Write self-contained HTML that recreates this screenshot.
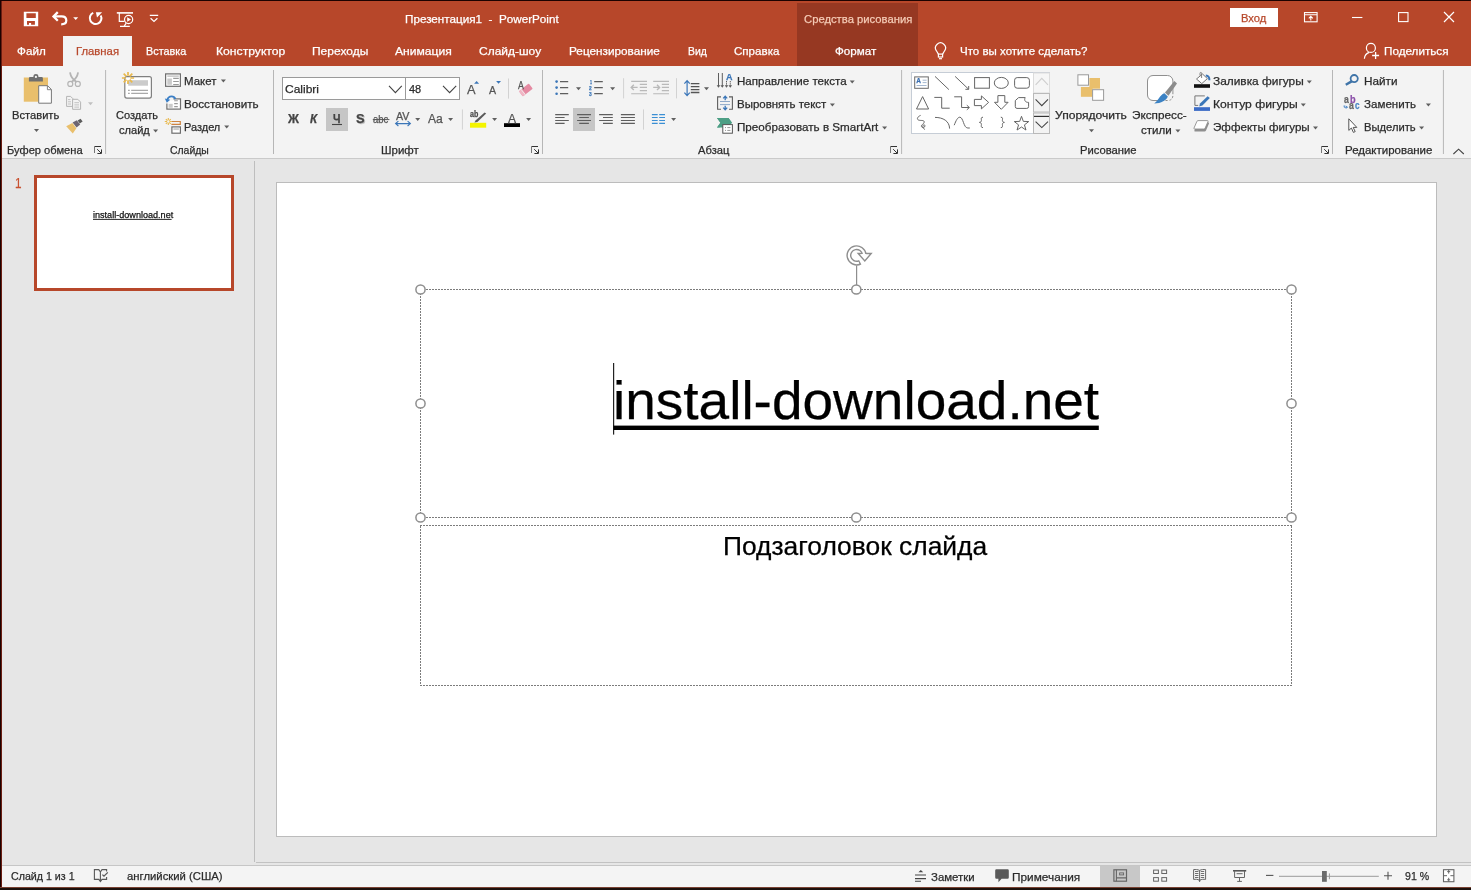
<!DOCTYPE html>
<html><head><meta charset="utf-8"><title>PowerPoint</title>
<style>
html,body{margin:0;padding:0;}
body{width:1471px;height:890px;overflow:hidden;position:relative;background:#e6e6e6;font-family:"Liberation Sans",sans-serif;}
.a{position:absolute;}
.t{position:absolute;white-space:pre;line-height:normal;transform-origin:0 0;-webkit-text-stroke:0.25px;}
svg{position:absolute;overflow:visible;}
</style></head>
<body>

<!-- window frame / title + tabs -->
<div class="a" style="left:0;top:0;width:1471px;height:66px;background:#b7472a"></div>
<div class="a" style="left:797px;top:3px;width:121px;height:63px;background:#963822"></div>
<div class="a" style="left:63px;top:36px;width:69px;height:30px;background:#f3f3f3"></div>
<div class="a" style="left:1230px;top:8px;width:48px;height:19px;background:#fff"></div>
<!-- ribbon body -->
<div class="a" style="left:0;top:66px;width:1471px;height:92px;background:#f3f3f3"></div>
<div class="a" style="left:0;top:158px;width:1471px;height:1px;background:#cacaca"></div>
<!-- workspace -->
<div class="a" style="left:254px;top:161px;width:1px;height:701px;background:#bebebe"></div>
<div class="a" style="left:256px;top:862px;width:1215px;height:1px;background:#c2c2c2"></div>
<!-- thumbnail -->
<div class="a" style="left:34px;top:175px;width:194px;height:110px;background:#fff;border:3px solid #b7472a"></div>
<!-- slide -->
<div class="a" style="left:276px;top:182px;width:1159px;height:653px;background:#fff;border:1px solid #bcbcbc"></div>
<!-- status bar -->
<div class="a" style="left:0;top:865px;width:1471px;height:1px;background:#c6c6c6"></div>
<div class="a" style="left:0;top:866px;width:1471px;height:21px;background:#f4f4f4"></div>
<div class="a" style="left:1100px;top:866px;width:40px;height:21px;background:#c8c8c8"></div>
<!-- dark frame edges -->
<div class="a" style="left:0;top:0;width:1471px;height:1px;background:#1c0200"></div>
<div class="a" style="left:0;top:0;width:1px;height:890px;background:#1c0200"></div>
<div class="a" style="left:1px;top:1px;width:1px;height:887px;background:#6a1d12"></div>
<div class="a" style="left:0;top:887px;width:1471px;height:1px;background:#7a4232"></div>
<div class="a" style="left:0;top:888px;width:1471px;height:2px;background:#1c110c"></div>
<svg width="1471" height="890" viewBox="0 0 1471 890" style="left:0;top:0">
<!-- save -->
<path d="M23.8,11.8h14.4v14.4h-14.4z M26.4,13.3v4.8h9.4v-4.8z M27,21.1v3.7h2v-1.9h2.1v1.9h3.8v-3.7z" fill="#fff" fill-rule="evenodd"/>
<!-- undo -->
<path d="M57.8,12.1L53.5,16.4L57.8,20.7" fill="none" stroke="#fff" stroke-width="2.3" stroke-linejoin="miter"/>
<path d="M54,16.4H61.6C65,16.4 66.3,18.6 66.3,20.5C66.3,23 64.2,24.3 61.2,24.3" fill="none" stroke="#fff" stroke-width="2.2"/>
<path d="M73.2,17.2h5l-2.5,2.9z" fill="#fff"/>
<!-- repeat -->
<path d="M93.2,12.9A5.8,5.8 0 1 0 100.7,15.4" fill="none" stroke="#fff" stroke-width="2"/>
<path d="M95.9,12.2H102.1L97,17.6z" fill="#fff"/>
<!-- present from start -->
<path d="M116.8,12.9H133" stroke="#fff" stroke-width="1.6" fill="none"/>
<path d="M119.3,13V21.4H124.4M126.2,23.2L124.2,26.2M120,26.3H129.8" stroke="#fff" stroke-width="1.2" fill="none"/>
<circle cx="128.6" cy="19.5" r="4.1" fill="none" stroke="#fff" stroke-width="1.2"/>
<path d="M127.2,17.2L131,19.5L127.2,21.8z" fill="#fff"/>
<!-- customize QAT -->
<path d="M149.8,15.4H158.2M150.6,18.2L154,21.4L157.4,18.2" stroke="#fff" stroke-width="1.2" fill="none"/>
<!-- ribbon display options -->
<rect x="1304.5" y="12.6" width="12.6" height="9.2" fill="none" stroke="#fff" stroke-width="1.1"/>
<path d="M1304.5,14.8H1317M1310.8,20.4V16.6M1308.8,18.4L1310.8,16.4L1312.8,18.4" fill="none" stroke="#fff" stroke-width="1.1"/>
<!-- min / max / close -->
<path d="M1352,17.5H1362.4" stroke="#fff" stroke-width="1.1"/>
<rect x="1398.6" y="12.6" width="9.4" height="9" fill="none" stroke="#fff" stroke-width="1.1"/>
<path d="M1444,12L1454,22M1454,12L1444,22" stroke="#fff" stroke-width="1.2"/>
<!-- lightbulb -->
<path d="M938.4,54.1L936.4,50.8A5,5 0 1 1 944.6,50.8L942.6,54.1" fill="none" stroke="#fff" stroke-width="1.2"/>
<rect x="938.4" y="54.1" width="4.2" height="2.9" fill="none" stroke="#fff" stroke-width="1.2"/>
<path d="M939,58.7H942" stroke="#fff" stroke-width="1.2"/>
<!-- share -->
<circle cx="1370.9" cy="47.9" r="4.5" fill="none" stroke="#fff" stroke-width="1.2"/>
<path d="M1364.4,58.8C1364.6,55.6 1366.4,53.4 1369.2,52.4" fill="none" stroke="#fff" stroke-width="1.2"/>
<path d="M1375.6,52V59M1372.1,55.5H1379.1" stroke="#fff" stroke-width="1.3"/>

<!-- paste -->
<rect x="23.8" y="77.5" width="24.2" height="24.2" fill="#e9bf6c"/>
<path d="M28.9,81.4V78.2Q28.9,77 30.2,77H33.4V76Q33.4,74.1 35.9,74.1Q38.4,74.1 38.4,76V77H41.6Q42.9,77 42.9,78.2V81.4z" fill="#6e6e6e"/>
<circle cx="35.9" cy="76.9" r="1.1" fill="#f3f3f3"/>
<path d="M38.7,85.7H47.6L51.4,89.5V103.2H38.7z" fill="#fff" stroke="#777" stroke-width="1"/>
<path d="M47.4,85.9V89.7H51.2" fill="none" stroke="#777" stroke-width="0.9"/>
<path d="M34.0,129.1h5l-2.5,3z" fill="#5f5f5f"/>
<!-- cut (disabled) -->
<circle cx="70.3" cy="83.9" r="2.5" fill="none" stroke="#b4b4b4" stroke-width="1.2"/>
<circle cx="77.8" cy="83.9" r="2.5" fill="none" stroke="#b4b4b4" stroke-width="1.2"/>
<path d="M70,72.3C70.6,76 73,79.6 76.4,81.8M78.1,72.3C77.5,76 75.1,79.6 71.7,81.8" fill="none" stroke="#b4b4b4" stroke-width="1.8"/>
<!-- copy (disabled) -->
<path d="M66.6,96.4H70.6L72.8,98.6V106.4H66.6z" fill="#f3f3f3" stroke="#b4b4b4" stroke-width="1"/>
<path d="M68,99.6H70.4M68,101.8H71M68,104H71" stroke="#b4b4b4" stroke-width="0.8"/>
<path d="M72.6,99.3H77.8L80.6,102.1V109.3H72.6z" fill="#f3f3f3" stroke="#b4b4b4" stroke-width="1"/>
<path d="M74.4,102.7H79M74.4,104.9H79M74.4,107.1H79" stroke="#b4b4b4" stroke-width="0.8"/>
<path d="M88.0,102.2h5l-2.5,3z" fill="#c0c0c0"/>
<!-- format painter -->
<path d="M66.2,126.2L72.4,123L76.4,128.2L72.8,133.4z" fill="#e9bf6c"/>
<path d="M72.6,122.4L76.8,120.2L80.2,124.6L76.6,127.6z" fill="#6d6470"/>
<path d="M77.6,120.6L80.6,118.8L82.6,121.4L79.8,123.4z" fill="#5d5d5d"/>
<path d="M101,146.5H94.5" fill="none" stroke="#333" stroke-width="1"/><path d="M94.5,146.5V153" fill="none" stroke="#777" stroke-width="1"/><path d="M97.2,149.2L101,153M101.5,149.4V153.5H97.4" fill="none" stroke="#333" stroke-width="1"/>
<rect x="105.1" y="70" width="1" height="84" fill="#b6b6b6"/>
<!-- new slide -->
<rect x="124.8" y="76.7" width="26.6" height="21.4" rx="2" fill="#fff" stroke="#808080" stroke-width="1.2"/>
<rect x="128.2" y="80.2" width="19.8" height="5.5" fill="#cbcbcb"/>
<path d="M131.2,90.4H148M131.2,93.4H148" stroke="#a9a9a9" stroke-width="1.1"/>
<path d="M128,90.4h1.8M128,93.4h1.8" stroke="#a9a9a9" stroke-width="1.1"/>
<g stroke="#e9b94c" stroke-width="1.7" stroke-linecap="butt">
<path d="M130.30,78.00L134.10,78.00M129.63,79.63L132.31,82.31M128.00,80.30L128.00,84.10M126.37,79.63L123.69,82.31M125.70,78.00L121.90,78.00M126.37,76.37L123.69,73.69M128.00,75.70L128.00,71.90M129.63,76.37L132.31,73.69"/>
</g>
<path d="M153.1,129.4h5l-2.5,3z" fill="#5f5f5f"/>
<!-- layout -->
<rect x="165.6" y="73.9" width="14.8" height="12.4" fill="#fff" stroke="#6e6e6e" stroke-width="1.2"/>
<rect x="167.3" y="75.3" width="11.5" height="1.7" fill="#cdcdcd"/>
<rect x="167.3" y="78.5" width="4.6" height="6.3" fill="#cbcbcb"/>
<path d="M173.2,78.4H178.8M173.2,81.5H178.8M173.2,84.5H178.8" stroke="#9a9a9a" stroke-width="1.1"/>
<path d="M220.9,79.4h5l-2.5,3z" fill="#5f5f5f"/>
<!-- reset -->
<rect x="166.9" y="98.9" width="13.6" height="10.2" fill="#fff" stroke="#6e6e6e" stroke-width="1.2"/>
<rect x="168.5" y="103.8" width="4.2" height="4" fill="#cbcbcb"/>
<path d="M174.2,100.8H177.8M174.2,103.6H177.8M174.2,106.6H177.8" stroke="#9a9a9a" stroke-width="1.1"/>
<path d="M163.6,95H173.4V100.4H169.6V103.4H163.6z" fill="#f3f3f3"/>
<path d="M175.4,99C174.6,97.2 173.2,96.4 171.6,96.4C169.4,96.4 167.8,97.8 167.2,100.2" fill="none" stroke="#3b7fc6" stroke-width="1.9"/>
<path d="M164.8,98.4L166.8,102.8L170.2,99.8z" fill="#3b7fc6"/>
<!-- section -->
<path d="M171.4,121.5H180.3V124.4H171.4" fill="none" stroke="#cf8440" stroke-width="1.2"/>
<rect x="171.9" y="126.9" width="8.5" height="6.3" fill="#fff" stroke="#6e6e6e" stroke-width="1.2"/>
<rect x="173.4" y="128.1" width="5.5" height="2" fill="#cbcbcb"/>
<path d="M169.50,121.50L171.80,121.50M169.15,122.35L170.77,123.97M168.30,122.70L168.30,125.00M167.45,122.35L165.83,123.97M167.10,121.50L164.80,121.50M167.45,120.65L165.83,119.03M168.30,120.30L168.30,118.00M169.15,120.65L170.77,119.03" stroke="#e9b94c" stroke-width="1.1"/>
<path d="M224.2,125.4h5l-2.5,3z" fill="#5f5f5f"/>
<rect x="273.0" y="70" width="1" height="84" fill="#b6b6b6"/>

<!-- font boxes -->
<rect x="282.5" y="77.5" width="177" height="22" fill="#fff" stroke="#9a9a9a" stroke-width="1"/>
<rect x="405" y="77.5" width="1" height="22" fill="#9a9a9a"/>
<path d="M389,85.8L395.4,92.6L401.8,85.8" fill="none" stroke="#444" stroke-width="1.1"/>
<path d="M443,85.8L449.6,92.6L456.2,85.8" fill="none" stroke="#444" stroke-width="1.1"/>
<!-- grow / shrink triangles -->
<path d="M474.1,83.8L476.6,81L479.1,83.8z" fill="#3b76b8"/>
<path d="M496.1,81L501,81L498.55,83.8z" fill="#3b76b8"/>
<rect x="508.0" y="78.5" width="1" height="20.099999999999994" fill="#d2d2d2"/>
<!-- clear formatting eraser -->
<g transform="rotate(-38 526 90)"><rect x="519.6" y="86.6" width="12.6" height="6.6" rx="1" fill="#e58aa2"/><rect x="519.6" y="86.6" width="3" height="6.6" fill="#f0b6c4"/><rect x="522.2" y="86.6" width="0.8" height="6.6" fill="#f3f3f3"/></g>
<!-- row2 highlights -->
<rect x="326" y="108" width="22" height="23" fill="#c6c6c6"/>
<path d="M332,124.5H342" stroke="#444" stroke-width="1.1"/>
<!-- strike -->
<path d="M372.8,119.6H389.4" stroke="#555" stroke-width="1"/>
<!-- AV arrow -->
<path d="M396,123.6H410M398.4,121.2L395.6,123.6L398.4,126M407.6,121.2L410.4,123.6L407.6,126" fill="none" stroke="#3b76b8" stroke-width="1.1"/>
<path d="M415.2,117.9h5l-2.5,3z" fill="#5f5f5f"/>
<path d="M448.1,117.9h5l-2.5,3z" fill="#5f5f5f"/>
<rect x="461.9" y="109.4" width="1" height="20.19999999999999" fill="#d2d2d2"/>
<!-- highlighter -->
<rect x="470" y="122.8" width="16.2" height="4.9" fill="#f4f400"/>
<path d="M484.6,112.4L486.2,113.6L477.4,122L474.4,122.6L475.8,120.2z" fill="#5a5a5a"/>
<path d="M492.1,117.9h5l-2.5,3z" fill="#5f5f5f"/>
<!-- font color bar -->
<rect x="504" y="123.2" width="16" height="3.8" fill="#000"/>
<path d="M526.1,117.9h5l-2.5,3z" fill="#5f5f5f"/>
<path d="M538,146.5H531.5" fill="none" stroke="#333" stroke-width="1"/><path d="M531.5,146.5V153" fill="none" stroke="#777" stroke-width="1"/><path d="M534.2,149.2L538,153M538.5,149.4V153.5H534.4" fill="none" stroke="#333" stroke-width="1"/>
<rect x="542.0" y="70" width="1" height="84" fill="#b6b6b6"/>
<!-- bullets -->
<circle cx="556.6" cy="81.6" r="1.3" fill="#3b76b8"/><circle cx="556.6" cy="87.6" r="1.3" fill="#3b76b8"/><circle cx="556.6" cy="93.7" r="1.3" fill="#3b76b8"/>
<path d="M560,81.6H568.2M560,87.6H568.2M560,93.7H568.2" stroke="#5e5e5e" stroke-width="1.2" fill="none"/>
<path d="M576.0,87.2h5l-2.5,3z" fill="#5f5f5f"/>
<!-- numbering -->
<path d="M594.2,81.6H602.8M594.2,87.6H602.8M594.2,93.7H602.8" stroke="#5e5e5e" stroke-width="1.2" fill="none"/>
<path d="M610.1,87.2h5l-2.5,3z" fill="#5f5f5f"/>
<rect x="623.1" y="78.2" width="1" height="20.200000000000003" fill="#d2d2d2"/>
<!-- indent dec/inc (disabled) -->
<path d="M631.2,81.4H647M639.8,84.4H647M639.8,87.4H647M639.8,90.6H647M631.2,93.7H647" stroke="#b9b9b9" stroke-width="1.1" fill="none"/>
<path d="M631,87.4H637.6M633.8,84.8L631.2,87.4L633.8,90" fill="none" stroke="#b9b9b9" stroke-width="1.4"/>
<path d="M653.2,81.4H669M661.8,84.4H669M661.8,87.4H669M661.8,90.6H669M653.2,93.7H669" stroke="#b9b9b9" stroke-width="1.1" fill="none"/>
<path d="M653.2,87.4H659.8M657,84.8L659.6,87.4L657,90" fill="none" stroke="#b9b9b9" stroke-width="1.4"/>
<rect x="676.0" y="78.2" width="1" height="20.200000000000003" fill="#d2d2d2"/>
<!-- line spacing -->
<path d="M687.1,80.8V95.4M684.4,83.6L687.1,80.6L689.8,83.6M684.4,92.6L687.1,95.6L689.8,92.6" fill="none" stroke="#3b76b8" stroke-width="1.2"/>
<path d="M690.8,83.6H699.4M690.8,86.6H699.4M690.8,89.6H699.4M690.8,92.5H699.4" stroke="#555" stroke-width="1.3" fill="none"/>
<path d="M704.0,87.2h5l-2.5,3z" fill="#5f5f5f"/>
<!-- align row -->
<path d="M555.2,114.6H568.8M555.2,117.5H564.6M555.2,120.5H568.8M555.2,123.4H564.6" stroke="#5e5e5e" stroke-width="1.2" fill="none"/>
<rect x="573" y="108" width="22" height="23" fill="#c6c6c6"/>
<path d="M577.1,114.6H591M579.2,117.5H588.9M577.1,120.5H591M579.2,123.4H588.9" stroke="#5e5e5e" stroke-width="1.2" fill="none"/>
<path d="M599.1,114.6H612.8M603,117.5H612.8M599.1,120.5H612.8M603,123.4H612.8" stroke="#5e5e5e" stroke-width="1.2" fill="none"/>
<path d="M620.9,114.6H634.9M620.9,117.5H634.9M620.9,120.5H634.9M620.9,123.4H634.9" stroke="#5e5e5e" stroke-width="1.2" fill="none"/>
<rect x="643.0" y="109.4" width="1" height="20.19999999999999" fill="#d2d2d2"/>
<path d="M651.9,114.6H657.7M651.9,117.5H657.7M651.9,120.5H657.7M651.9,123.4H657.7" stroke="#3b8fd4" stroke-width="1.2" fill="none"/>
<path d="M659.2,114.6H665M659.2,117.5H665M659.2,120.5H665M659.2,123.4H665" stroke="#3b8fd4" stroke-width="1.2" fill="none"/>
<path d="M671.1,118.1h5l-2.5,3z" fill="#5f5f5f"/>
<!-- text direction -->
<path d="M718.5,73V87M722.3,73V87" stroke="#5e5e5e" stroke-width="1"/>
<path d="M726.5,81V87M730.3,81V87" stroke="#5e5e5e" stroke-width="1" stroke-dasharray="1.4 0.8"/>
<path d="M716.7,85.2H720.3L718.5,87.8zM720.5,85.2H724.0999999999999L722.3,87.8zM724.7,85.2H728.3L726.5,87.8zM728.5,85.2H732.0999999999999L730.3,87.8z" fill="#5e5e5e"/>
<path d="M849.7,80.6h5l-2.5,3z" fill="#5f5f5f"/>
<!-- align text -->
<path d="M721,96.9H717.6V109.3H721M729,96.9H732.4V109.3H729" fill="none" stroke="#5e5e5e" stroke-width="1.1"/>
<path d="M720,101.5H730M720,104.6H730" stroke="#8fa9c8" stroke-width="1"/>
<path d="M725.2,100.2V96.6M723.2,98.4L725.2,96.2L727.2,98.4M725.2,105.8V109.6M723.2,107.6L725.2,109.8L727.2,107.6" fill="none" stroke="#3b76b8" stroke-width="1.3"/>
<path d="M829.9,103.4h5l-2.5,3z" fill="#5f5f5f"/>
<!-- smartart -->
<path d="M717,118H728.5L732,122.8H722.6L719.6,127.5H717L720.4,122.8z" fill="#4d9f85"/>
<path d="M717,118H728.5L732,122.8L728.6,127.4H717L720.4,122.8z" fill="#4d9f85"/>
<rect x="722.8" y="124.6" width="9.6" height="8.6" fill="#fff" stroke="#555" stroke-width="1"/>
<path d="M727.3,127.6H730.4M727.3,130.4H730.4" stroke="#888" stroke-width="0.9"/>
<path d="M725,127.6h1M725,130.4h1" stroke="#888" stroke-width="0.9"/>
<path d="M882.1,126.4h5l-2.5,3z" fill="#5f5f5f"/>
<path d="M897,146.5H890.5" fill="none" stroke="#333" stroke-width="1"/><path d="M890.5,146.5V153" fill="none" stroke="#777" stroke-width="1"/><path d="M893.2,149.2L897,153M897.5,149.4V153.5H893.4" fill="none" stroke="#333" stroke-width="1"/>
<rect x="901.1" y="70" width="1" height="84" fill="#b6b6b6"/>

<!-- shapes gallery -->
<rect x="911.5" y="72.5" width="138" height="61" fill="#fff" stroke="#c6cdd6" stroke-width="1"/>
<rect x="1033.5" y="73" width="16" height="20" fill="#f6f6f6" stroke="#dcdcdc" stroke-width="1"/>
<rect x="1033.5" y="93.5" width="16" height="18.5" fill="#f3f3f3" stroke="#b9b9b9" stroke-width="1"/>
<rect x="1033.5" y="113" width="16" height="20.5" fill="#f3f3f3" stroke="#b9b9b9" stroke-width="1"/>
<path d="M1035.6,84.8L1041.8,78.4L1048,84.8" fill="none" stroke="#cfcfcf" stroke-width="1.1"/>
<path d="M1035.6,99.4L1041.8,105.6L1048,99.4" fill="none" stroke="#444" stroke-width="1.1"/>
<path d="M1034,116.4H1049" stroke="#333" stroke-width="1.2"/>
<path d="M1035.6,121.6L1041.8,127.6L1048,121.6" fill="none" stroke="#444" stroke-width="1.1"/>
<g fill="none" stroke="#666" stroke-width="1">
<!-- row1 -->
<rect x="914.7" y="76.9" width="13.6" height="11.4" stroke="#6a6a6a" stroke-width="1"/>
<path d="M935,76.4L948.9,89.6"/>
<path d="M955.1,76.4L968.6,89.2M968.7,86V89.3H965.4"/>
<rect x="974.6" y="77.6" width="14.8" height="10.6"/>
<ellipse cx="1001.3" cy="82.9" rx="7" ry="5.5"/>
<rect x="1014.6" y="77.6" width="14.8" height="10.6" rx="2.6"/>
<!-- row2 -->
<path d="M922.6,96.6L928.6,109H916.5z"/>
<path d="M934.3,97.4H941.7V108.2H949.7"/>
<path d="M954.2,96.8H961.6V107.5H969.2M966.8,105.2L969.4,107.5L966.8,109.8"/>
<path d="M974.4,99.4H981.4V95.9L988.6,102.4L981.4,108.9V105.6H974.4z"/>
<path d="M997.9,95.6H1004.8V102.3H1008.1L1001.3,109.3L994.5,102.3H997.9z"/>
<path d="M1018.6,97.6H1025.2C1023.8,100.2 1025.4,102.6 1028.6,102.4V106.6Q1028.6,108.4 1026.8,108.4H1017Q1015.3,108.4 1015.3,106.6V100.6z"/>
<!-- row3 -->
<path d="M920.6,115.4C917.6,116.6 916.4,119 918.4,120C920.6,121 924.4,119.6 924.2,122.2C924,124.4 920.6,124.6 921.4,126.6C922,128.2 925.2,127.6 925,125.8C924.8,124.2 922.4,124.8 922.8,126.8C923,128 924,129 925,129.6"/>
<path d="M935,117.4C943,117.4 949.4,121 949.6,128.6"/>
<path d="M954.2,125.2C956,120.6 957.6,117.2 959.8,117.2C963.4,117.2 963.4,128 967.8,128H969.8"/>
<path d="M983,117.2C980.6,117.2 981.4,119 981.4,120.4C981.4,121.8 980.4,122.3 979.4,122.4C980.4,122.5 981.4,123 981.4,124.4C981.4,125.8 980.6,127.6 983,127.6"/>
<path d="M1000.8,117.2C1003.2,117.2 1002.4,119 1002.4,120.4C1002.4,121.8 1003.4,122.3 1004.4,122.4C1003.4,122.5 1002.4,123 1002.4,124.4C1002.4,125.8 1003.2,127.6 1000.8,127.6"/>
<path d="M1021.50,116.30L1023.32,121.39L1028.73,121.55L1024.45,124.86L1025.97,130.05L1021.50,127.00L1017.03,130.05L1018.55,124.86L1014.27,121.55L1019.68,121.39z"/>
</g>
<path d="M916.6,85.5H926.6M922.6,80.2H926.6M922.6,82.6H926.6" stroke="#9bb0cc" stroke-width="0.9" fill="none"/>
<!-- arrange -->
<rect x="1089.4" y="78" width="10.6" height="10.7" fill="#e9bf6c"/>
<rect x="1080.9" y="87" width="11.7" height="9.8" fill="#e9bf6c"/>
<rect x="1077.9" y="74.8" width="10.6" height="10.4" fill="#fff" stroke="#9a9a9a" stroke-width="1"/>
<rect x="1092.6" y="89.7" width="11" height="10.6" fill="#fff" stroke="#9a9a9a" stroke-width="1"/>
<path d="M1089.0,129.2h5l-2.5,3z" fill="#5f5f5f"/>
<!-- quick styles -->
<rect x="1147.5" y="75.5" width="25.4" height="25" rx="5.5" fill="#fff" stroke="#8f8f8f" stroke-width="1"/>
<path d="M1163,101.6H1174.6V92H1163z" fill="#f3f3f3"/>
<path d="M1172.9,92V95Q1172.9,100.5 1167.4,100.5H1163" fill="none" stroke="#8f8f8f" stroke-width="1" stroke-dasharray="2.2 1.6"/>
<path d="M1174.4,81L1177,83.6L1168.4,95.8L1165,92.6z" fill="#8c8c8c"/>
<path d="M1164.4,93.2L1167.8,96.4C1167,100 1161,103.4 1154.2,103.4C1158.4,100.6 1159.6,95 1164.4,93.2z" fill="#3b82c4"/>
<path d="M1175.4,129.4h5l-2.5,3z" fill="#5f5f5f"/>
<!-- shape fill -->
<path d="M1202.5,74L1207.4,78.6L1201.8,83.6L1196.5,79z" fill="#fff" stroke="#777" stroke-width="1"/>
<path d="M1201.6,78V73.4Q1201.6,72.4 1200.8,72.4Q1200,72.4 1200,73.4V75.6" fill="none" stroke="#777" stroke-width="0.9"/>
<path d="M1205.8,75.4Q1209.6,75.8 1209.4,80.2" fill="none" stroke="#3b76b8" stroke-width="2"/>
<rect x="1194" y="84.2" width="16" height="3.6" fill="#111"/>
<path d="M1306.8,80.6h5l-2.5,3z" fill="#5f5f5f"/>
<!-- shape outline -->
<path d="M1204.8,95.9H1194.9V105.4H1198.2" fill="none" stroke="#777" stroke-width="1"/>
<path d="M1207.6,96.2L1209.8,98L1202.4,105.6L1199.2,106.4L1200,103.6z" fill="#3b76b8"/>
<rect x="1194" y="107.2" width="16" height="3.7" fill="#3c6cc6"/>
<path d="M1300.8,103.4h5l-2.5,3z" fill="#5f5f5f"/>
<!-- shape effects -->
<path d="M1198.4,122.6H1208.4Q1209.4,122.6 1209,123.6L1206,130.4Q1205.6,131.4 1204.6,131.4H1195Q1194,131.4 1194.4,130.4L1197.4,123.6Q1197.8,122.6 1198.4,122.6z" fill="#8f8f8f"/>
<path d="M1198,120.6H1207.4Q1208.4,120.6 1208,121.6L1205.2,128Q1204.8,129 1203.8,129H1194.6Q1193.6,129 1194,128L1196.8,121.6Q1197.2,120.6 1198,120.6z" fill="#fff" stroke="#8f8f8f" stroke-width="0.9"/>
<path d="M1313.0,126.4h5l-2.5,3z" fill="#5f5f5f"/>
<path d="M1328,146.5H1321.5" fill="none" stroke="#333" stroke-width="1"/><path d="M1321.5,146.5V153" fill="none" stroke="#777" stroke-width="1"/><path d="M1324.2,149.2L1328,153M1328.5,149.4V153.5H1324.4" fill="none" stroke="#333" stroke-width="1"/>
<rect x="1332.0" y="70" width="1" height="84" fill="#b6b6b6"/>
<!-- find -->
<circle cx="1354.2" cy="78.6" r="3.6" fill="none" stroke="#3f74a8" stroke-width="1.8"/>
<path d="M1351.6,81.4L1345.8,84.8" stroke="#3f74a8" stroke-width="2.4" fill="none"/>
<!-- replace arrow -->
<path d="M1344.2,105.4V107.2H1347.2M1346,105.8L1347.4,107.2L1346,108.6" fill="none" stroke="#3f7fc4" stroke-width="1"/>
<path d="M1425.9,103.5h5l-2.5,3z" fill="#5f5f5f"/>
<!-- select cursor -->
<path d="M1348.8,118.8V130.4L1351.4,128L1353.4,132.4L1355.2,131.6L1353.2,127.4H1356.8z" fill="#fff" stroke="#555" stroke-width="1"/>
<path d="M1419.1,126.4h5l-2.5,3z" fill="#5f5f5f"/>
<rect x="1442.9" y="70" width="1" height="84" fill="#b6b6b6"/>
<path d="M1453.4,154L1458.6,149.2L1463.8,154" fill="none" stroke="#444" stroke-width="1.1"/>

<!-- title placeholder frame -->
<path d="M420,289.5H1292M420,517.5H1292M420.5,290V517M1291.5,290V517" fill="none" stroke="#7c7c7c" stroke-width="1" stroke-dasharray="2 1"/>
<path d="M420,525.5H1292M420,685.5H1292M420.5,526V685M1291.5,526V685" fill="none" stroke="#7c7c7c" stroke-width="1" stroke-dasharray="2 1"/>
<path d="M856.6,265.6V285" stroke="#8e8e8e" stroke-width="1.2"/>
<circle cx="420.5" cy="289.5" r="4.6" fill="#fff" stroke="#8e8e8e" stroke-width="1.5"/><circle cx="420.5" cy="403.5" r="4.6" fill="#fff" stroke="#8e8e8e" stroke-width="1.5"/><circle cx="420.5" cy="517.5" r="4.6" fill="#fff" stroke="#8e8e8e" stroke-width="1.5"/><circle cx="856.3" cy="289.5" r="4.6" fill="#fff" stroke="#8e8e8e" stroke-width="1.5"/><circle cx="856.3" cy="517.5" r="4.6" fill="#fff" stroke="#8e8e8e" stroke-width="1.5"/><circle cx="1291.5" cy="289.5" r="4.6" fill="#fff" stroke="#8e8e8e" stroke-width="1.5"/><circle cx="1291.5" cy="403.5" r="4.6" fill="#fff" stroke="#8e8e8e" stroke-width="1.5"/><circle cx="1291.5" cy="517.5" r="4.6" fill="#fff" stroke="#8e8e8e" stroke-width="1.5"/>
<!-- rotate handle -->
<path d="M860.21,262.20A7.7,7.7 0 1 1 864.23,254.33" fill="none" stroke="#8e8e8e" stroke-width="5"/>
<path d="M858.2,253.5H871.2L864.8,261z" fill="#fff" stroke="#8e8e8e" stroke-width="1.4" stroke-linejoin="miter"/>
<path d="M858.98,262.72A7.7,7.7 0 1 1 864.23,254.33" fill="none" stroke="#fff" stroke-width="2.2"/>
<path d="M860.4,254.1H866.6L864.4,256.6z" fill="#fff"/>
<!-- caret -->
<rect x="613" y="363" width="1.2" height="71.6" fill="#222"/>
<!-- title underline -->
<rect x="613.4" y="425.6" width="485.4" height="4.4" fill="#000"/>
<!-- thumbnail underline -->
<rect x="93" y="218.9" width="78.6" height="0.9" fill="#111"/>
<!-- status: spelling -->
<path d="M100.4,872V881.4M100.4,872L98.8,869.6H94.4V879.4H98.8L100.4,881.6L102,879.4H106.6V877M100.4,872L102,869.6H106.6V871.6" fill="none" stroke="#595959" stroke-width="1.1"/>
<path d="M102.4,874.6L104,876.2L107.8,872.4" fill="none" stroke="#595959" stroke-width="1.3"/>
<!-- notes -->
<path d="M918.4,872.3L920.8,870L923.2,872.3z" fill="#444"/>
<path d="M915,875H926M915,878.6H926M915,881.3H921" stroke="#444" stroke-width="1.1"/>
<!-- comments -->
<path d="M996.4,869.3H1007.6Q1008.8,869.3 1008.8,870.5V877.5Q1008.8,878.7 1007.6,878.7H1001.6L998.4,882.2V878.7H996.4Q995.2,878.7 995.2,877.5V870.5Q995.2,869.3 996.4,869.3z" fill="#595959"/>
<!-- normal view -->
<rect x="1113.9" y="869.8" width="12.6" height="11.4" fill="none" stroke="#666" stroke-width="1.2"/>
<path d="M1116.4,869.8V881.2M1116.4,877.9H1126.5" stroke="#666" stroke-width="1.1" fill="none"/>
<rect x="1119.6" y="872.9" width="4" height="2" fill="none" stroke="#666" stroke-width="0.9"/>
<!-- sorter -->
<g fill="none" stroke="#666" stroke-width="1"><rect x="1153.6" y="870.1" width="4.8" height="3.4"/><rect x="1161.8" y="870.1" width="4.8" height="3.4"/><rect x="1153.6" y="877.6" width="4.8" height="3.6"/><rect x="1161.8" y="877.6" width="4.8" height="3.6"/></g>
<!-- reading view -->
<path d="M1199.6,870.4V881.6M1199.6,870.4C1197.6,869.4 1195.6,869.4 1193.6,869.6V879.4C1195.6,879.2 1197.6,879.2 1199.6,880.2C1201.6,879.2 1203.6,879.2 1205.6,879.4V869.6C1203.6,869.4 1201.6,869.4 1199.6,870.4" fill="none" stroke="#666" stroke-width="1"/>
<path d="M1195,871.5H1198.4M1195,873.5H1198.4M1195,875.5H1198.4M1195,877.5H1198.4M1200.8,871.5H1204.2M1200.8,873.5H1204.2M1200.8,875.5H1204.2M1200.8,877.5H1204.2" stroke="#707070" stroke-width="1"/>
<path d="M1198.4,880.4L1199.6,882L1200.8,880.4z" fill="#666"/>
<!-- slideshow -->
<path d="M1233,870.8H1246.2" stroke="#555" stroke-width="1.6"/>
<path d="M1234.6,871V877.5H1244.5V871M1239.5,877.5V881.4M1237.2,881.4H1241.9M1236.6,873.7H1242.6" fill="none" stroke="#666" stroke-width="1"/>
<!-- zoom slider -->
<path d="M1266,875.4H1273.4" stroke="#555" stroke-width="1.1"/>
<path d="M1279,876.3H1378.8M1329.4,873.4V879.2" stroke="#9a9a9a" stroke-width="1"/>
<rect x="1322" y="871" width="4.8" height="10.8" fill="#6a6a6a"/>
<path d="M1384,875.8H1392M1388,871.8V879.8" stroke="#555" stroke-width="1.1"/>
<!-- fit to window -->
<rect x="1443.5" y="869.7" width="10.4" height="12" fill="#fff" stroke="#666" stroke-width="1.1"/>
<path d="M1448.7,869.7V873.6M1447.2,871.6H1450.2M1448.7,881.7V877.8M1447.2,879.8H1450.2M1443.5,875.7H1447M1453.9,875.7H1450.4" stroke="#666" stroke-width="1" fill="none"/>
</svg>
<div id="tx" style="position:absolute;left:0;top:0;width:1471px;height:890px;will-change:transform">
<span class="t" style="left:404.50px;top:13.00px;font-size:11.5px;color:#ffffff;transform:scaleX(1.0159);">Презентация1  -  PowerPoint</span>
<span class="t" style="left:804.40px;top:13.00px;font-size:11.5px;color:#f5cbb6;transform:scaleX(0.9793);">Средства рисования</span>
<span class="t" style="left:1241.40px;top:12.00px;font-size:11.5px;color:#b7472a;transform:scaleX(0.9732);">Вход</span>
<span class="t" style="left:17.30px;top:45.00px;font-size:11.5px;color:#ffffff;transform:scaleX(1.0159);">Файл</span>
<span class="t" style="left:75.50px;top:45.00px;font-size:11.5px;color:#b7472a;transform:scaleX(0.9829);">Главная</span>
<span class="t" style="left:146.40px;top:45.00px;font-size:11.5px;color:#ffffff;transform:scaleX(0.9412);">Вставка</span>
<span class="t" style="left:215.60px;top:45.00px;font-size:11.5px;color:#ffffff;transform:scaleX(1.0572);">Конструктор</span>
<span class="t" style="left:312.00px;top:45.00px;font-size:11.5px;color:#ffffff;transform:scaleX(1.0433);">Переходы</span>
<span class="t" style="left:395.30px;top:45.00px;font-size:11.5px;color:#ffffff;transform:scaleX(1.0510);">Анимация</span>
<span class="t" style="left:479.30px;top:45.00px;font-size:11.5px;color:#ffffff;transform:scaleX(1.0423);">Слайд-шоу</span>
<span class="t" style="left:569.30px;top:45.00px;font-size:11.5px;color:#ffffff;transform:scaleX(1.0237);">Рецензирование</span>
<span class="t" style="left:687.80px;top:45.00px;font-size:11.5px;color:#ffffff;transform:scaleX(0.9055);">Вид</span>
<span class="t" style="left:734.00px;top:45.00px;font-size:11.5px;color:#ffffff;transform:scaleX(1.0062);">Справка</span>
<span class="t" style="left:835.40px;top:45.00px;font-size:11.5px;color:#ffffff;transform:scaleX(1.0100);">Формат</span>
<span class="t" style="left:960.00px;top:45.00px;font-size:11.5px;color:#ffffff;transform:scaleX(1.0021);">Что вы хотите сделать?</span>
<span class="t" style="left:1383.50px;top:45.00px;font-size:11.5px;color:#ffffff;transform:scaleX(1.0162);">Поделиться</span>
<span class="t" style="left:12.20px;top:108.60px;font-size:11.5px;color:#2b2b2b;transform:scaleX(0.9702);">Вставить</span>
<span class="t" style="left:7.10px;top:143.60px;font-size:11.5px;color:#2b2b2b;transform:scaleX(0.9677);">Буфер обмена</span>
<span class="t" style="left:116.40px;top:108.60px;font-size:11.5px;color:#2b2b2b;transform:scaleX(0.9608);">Создать</span>
<span class="t" style="left:118.50px;top:124.40px;font-size:11.5px;color:#2b2b2b;transform:scaleX(0.9635);">слайд</span>
<span class="t" style="left:184.40px;top:74.80px;font-size:11.5px;color:#2b2b2b;transform:scaleX(0.9946);">Макет</span>
<span class="t" style="left:184.40px;top:97.80px;font-size:11.5px;color:#2b2b2b;transform:scaleX(1.0129);">Восстановить</span>
<span class="t" style="left:184.40px;top:120.60px;font-size:11.5px;color:#2b2b2b;transform:scaleX(0.9544);">Раздел</span>
<span class="t" style="left:169.60px;top:143.60px;font-size:11.5px;color:#2b2b2b;transform:scaleX(0.9073);">Слайды</span>
<span class="t" style="left:285.40px;top:82.60px;font-size:11.5px;color:#2b2b2b;transform:scaleX(1.0426);">Calibri</span>
<span class="t" style="left:409.00px;top:82.60px;font-size:11.5px;color:#2b2b2b;transform:scaleX(0.9519);">48</span>
<span class="t" style="left:380.50px;top:143.60px;font-size:11.5px;color:#2b2b2b;transform:scaleX(0.9982);">Шрифт</span>
<span class="t" style="left:736.60px;top:75.20px;font-size:11.5px;color:#2b2b2b;transform:scaleX(1.0053);">Направление текста</span>
<span class="t" style="left:736.60px;top:97.90px;font-size:11.5px;color:#2b2b2b;transform:scaleX(0.9976);">Выровнять текст</span>
<span class="t" style="left:736.60px;top:120.60px;font-size:11.5px;color:#2b2b2b;transform:scaleX(1.0129);">Преобразовать в SmartArt</span>
<span class="t" style="left:698.00px;top:143.60px;font-size:11.5px;color:#2b2b2b;transform:scaleX(0.9733);">Абзац</span>
<span class="t" style="left:1055.00px;top:108.60px;font-size:11.5px;color:#2b2b2b;transform:scaleX(1.0505);">Упорядочить</span>
<span class="t" style="left:1132.20px;top:108.60px;font-size:11.5px;color:#2b2b2b;transform:scaleX(1.0224);">Экспресс-</span>
<span class="t" style="left:1140.70px;top:124.40px;font-size:11.5px;color:#2b2b2b;transform:scaleX(1.0049);">стили</span>
<span class="t" style="left:1213.10px;top:75.20px;font-size:11.5px;color:#2b2b2b;transform:scaleX(1.0325);">Заливка фигуры</span>
<span class="t" style="left:1213.10px;top:97.90px;font-size:11.5px;color:#2b2b2b;transform:scaleX(1.0543);">Контур фигуры</span>
<span class="t" style="left:1213.10px;top:120.60px;font-size:11.5px;color:#2b2b2b;transform:scaleX(1.0087);">Эффекты фигуры</span>
<span class="t" style="left:1080.00px;top:143.60px;font-size:11.5px;color:#2b2b2b;transform:scaleX(0.9771);">Рисование</span>
<span class="t" style="left:1363.60px;top:74.80px;font-size:11.5px;color:#2b2b2b;transform:scaleX(1.0219);">Найти</span>
<span class="t" style="left:1363.60px;top:97.80px;font-size:11.5px;color:#2b2b2b;transform:scaleX(1.0061);">Заменить</span>
<span class="t" style="left:1363.60px;top:120.80px;font-size:11.5px;color:#2b2b2b;transform:scaleX(0.9743);">Выделить</span>
<span class="t" style="left:1344.50px;top:143.80px;font-size:11.5px;color:#2b2b2b;transform:scaleX(0.9976);">Редактирование</span>
<span class="t" style="left:288.01px;top:111.80px;font-size:12px;color:#444;transform:scaleX(1.0083);font-weight:bold;">Ж</span>
<span class="t" style="left:310.40px;top:111.80px;font-size:12px;color:#444;transform:scaleX(0.9667);font-weight:bold;font-style:italic;">К</span>
<span class="t" style="left:333.20px;top:111.80px;font-size:12px;color:#444;transform:scaleX(0.8875);font-weight:bold;">Ч</span>
<span class="t" style="left:356.60px;top:112.90px;font-size:12.5px;color:#bdbdbd;transform:scaleX(1.0250);font-weight:bold;">S</span>
<span class="t" style="left:355.60px;top:112.20px;font-size:12.5px;color:#444;transform:scaleX(1.0250);font-weight:bold;">S</span>
<span class="t" style="left:373.20px;top:112.80px;font-size:11px;color:#555;transform:scaleX(0.8610);">abc</span>
<span class="t" style="left:396.00px;top:110.50px;font-size:10px;color:#555;transform:scaleX(1.0675);">AV</span>
<span class="t" style="left:428.10px;top:112.00px;font-size:12px;color:#555;transform:scaleX(1.0064);">Aa</span>
<span class="t" style="left:466.50px;top:81.70px;font-size:13px;color:#555;transform:scaleX(0.9889);">A</span>
<span class="t" style="left:489.20px;top:84.70px;font-size:10.3px;color:#555;transform:scaleX(1.0286);">A</span>
<span class="t" style="left:517.80px;top:78.70px;font-size:11px;color:#555;transform:scaleX(0.8000);">A</span>
<span class="t" style="left:469.80px;top:109.20px;font-size:8.8px;color:#4a4a4a;transform:scaleX(0.8079);font-weight:bold;">ab</span>
<span class="t" style="left:507.90px;top:110.70px;font-size:13px;color:#555;transform:scaleX(0.9333);">A</span>
<span class="t" style="left:589.60px;top:78.80px;font-size:6px;color:#3b76b8;transform:scaleX(0.6000);font-weight:bold;">1</span>
<span class="t" style="left:589.20px;top:84.80px;font-size:6px;color:#3b76b8;transform:scaleX(0.8000);font-weight:bold;">2</span>
<span class="t" style="left:589.20px;top:90.90px;font-size:6px;color:#3b76b8;transform:scaleX(0.8000);font-weight:bold;">3</span>
<span class="t" style="left:725.60px;top:70.50px;font-size:9.6px;color:#3b76b8;transform:scaleX(0.9429);font-weight:bold;">A</span>
<span class="t" style="left:1343.90px;top:93.60px;font-size:10px;color:#666;transform:scaleX(0.8667);font-weight:bold;">a</span>
<span class="t" style="left:1349.80px;top:93.60px;font-size:10px;color:#8a4fa8;transform:scaleX(0.9167);font-weight:bold;">b</span>
<span class="t" style="left:1349.20px;top:100.30px;font-size:10px;color:#666;transform:scaleX(0.8667);font-weight:bold;">a</span>
<span class="t" style="left:1355.10px;top:100.30px;font-size:10px;color:#4a86c4;transform:scaleX(0.8167);font-weight:bold;">c</span>
<span class="t" style="left:916.20px;top:77.40px;font-size:6.5px;color:#3b6fb0;transform:scaleX(1.0000);font-weight:bold;">A</span>
<span class="t" style="left:10.60px;top:870.00px;font-size:11.5px;color:#2b2b2b;transform:scaleX(0.9264);">Слайд 1 из 1</span>
<span class="t" style="left:126.50px;top:870.00px;font-size:11.5px;color:#2b2b2b;transform:scaleX(0.9834);">английский (США)</span>
<span class="t" style="left:931.20px;top:870.70px;font-size:11.5px;color:#2b2b2b;transform:scaleX(0.9940);">Заметки</span>
<span class="t" style="left:1012.40px;top:870.70px;font-size:11.5px;color:#2b2b2b;transform:scaleX(1.0277);">Примечания</span>
<span class="t" style="left:1405.00px;top:869.60px;font-size:11.5px;color:#2b2b2b;transform:scaleX(0.9197);">91 %</span>
<span class="t" style="left:14.54px;top:173.70px;font-size:15.5px;color:#c8502f;transform:scaleX(0.7571);">1</span>
<span class="t" style="left:93.40px;top:209.20px;font-size:9.4px;color:#111;transform:scaleX(0.9681);">install-download.net</span>
<span class="t" style="left:612.77px;top:368.60px;font-size:54.5px;color:#000;transform:scaleX(1.0092);">install-download.net</span>
<span class="t" style="left:722.79px;top:531.70px;font-size:25px;color:#000;transform:scaleX(1.0556);">Подзаголовок слайда</span>
</div>
</body></html>
